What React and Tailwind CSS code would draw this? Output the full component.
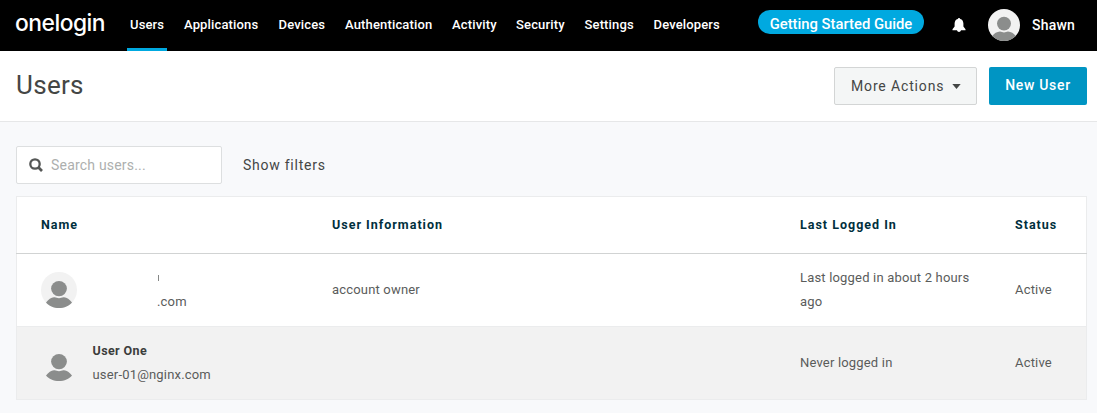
import React from 'react';

const navItems = [
  { label: 'Users', width: 'w-[54px]', active: true },
  { label: 'Applications', width: 'w-[94.5px]' },
  { label: 'Devices', width: 'w-[66.5px]' },
  { label: 'Authentication', width: 'w-[107px]' },
  { label: 'Activity', width: 'w-[64px]' },
  { label: 'Security', width: 'w-[68.5px]' },
  { label: 'Settings', width: 'w-[69px]' },
  { label: 'Developers', width: 'w-[80px]' },
];

function Person() {
  return (
    <>
      <path
        d="M5 30.5C7.500 27.300 10.500 25 13.500 25.300C15.200 25.500 16.400 26.200 18 26.200C19.600 26.200 20.800 25.500 22.500 25.300C25.500 25 28.500 27.300 31 30.500C28.200 34 23.500 36 18 36C12.500 36 7.800 34 5 30.500Z"
        fill="#8b8d8c"
      />
      <ellipse cx="18" cy="16.600" rx="7.900" ry="7.600" fill="#8b8d8c" />
    </>
  );
}

function Avatar() {
  return (
    <svg viewBox="0 0 36 36" className="block size-9 shrink-0">
      <circle cx="18" cy="18" r="18" fill="#f2f2f2" />
      <Person />
    </svg>
  );
}

function HeaderAvatar() {
  return (
    <svg viewBox="0 0 32 32" className="block size-8 shrink-0">
      <circle cx="16" cy="16" r="16" fill="#f2f2f2" />
      <path
        d="M4.300 27C6 24.500 9 22.700 12 22.600C13.500 22.700 14.500 23.600 16 23.600C17.500 23.600 18.500 22.700 20 22.600C23 22.700 26 24.500 27.700 27C24.900 30.100 20.700 32 16 32C11.300 32 7.100 30.100 4.300 27Z"
        fill="#8b8d8c"
      />
      <ellipse cx="16" cy="14.600" rx="7" ry="6.800" fill="#8b8d8c" />
    </svg>
  );
}

function Header() {
  return (
    <header className="flex h-[51px] bg-black text-white">
      <svg viewBox="0 0 112 51" className="block h-[51px] w-[112px] shrink-0" role="img" aria-label="onelogin">
        <text
          x="15"
          y="31.200"
          textLength="90"
          lengthAdjust="spacingAndGlyphs"
          fill="#fff"
          className="font-['Inter',sans-serif] text-[23px] font-medium tracking-[-0.500px]"
        >
          onelogin
        </text>
      </svg>
      <nav className="ml-[18px] flex text-[13px] font-medium leading-[49px] tracking-[0.150px]">
        {navItems.map((item) => (
          <div key={item.label} className={item.width + ' shrink-0 whitespace-nowrap'}>
            {item.active ? (
              <div className="-ml-[3px] h-[51px] w-10 border-b-[3px] border-[#00a9e0] pl-[3px]">{item.label}</div>
            ) : (
              item.label
            )}
          </div>
        ))}
      </nav>
      <div className="ml-auto flex items-center pr-[21px]">
        <div className="-mt-[7px] h-6 w-[166px] rounded-full bg-[#00a9e0] text-center text-[14.800px] font-medium leading-[28px] whitespace-nowrap">
          Getting Started Guide
        </div>
        <svg viewBox="0 0 14 14" className="-mt-px ml-7 block size-3.5" fill="#fff">
          <path d="M7 0C7.700 0 8.100.4 8.200 1C10.300 1.500 11.300 3.300 11.400 5.500V8.500L13.500 11.200V12.300H9C8.700 13.400 7.900 14 7 14C6.100 14 5.300 13.400 5 12.300H.5V11.200L2.600 8.500V5.500C2.700 3.300 3.700 1.500 5.800 1C5.900.4 6.300 0 7 0Z" />
        </svg>
        <div className="-mt-px ml-[22px]">
          <HeaderAvatar />
        </div>
        <span className="-mt-px ml-3 w-[44px] text-sm font-medium tracking-[0.200px]">Shawn</span>
      </div>
    </header>
  );
}

function TitleBar() {
  return (
    <div className="flex h-[71px] justify-between border-b border-[#e6e7e8] bg-white pl-4 pr-2.5">
      <h1 className="pt-[17px] text-[26px] leading-[34px] tracking-[0.300px] text-[#444645]">Users</h1>
      <div className="flex gap-3 pt-4">
        <button className="flex h-[38px] w-[143px] items-center rounded-[2px] border border-[#d3d5d5] bg-[#f4f6f6] pl-4 text-sm tracking-[0.850px] text-[#444645]">
          More Actions
          <svg viewBox="0 0 10 6" className="ml-2 h-[5px] w-[9px]">
            <path d="M0 0H10L5 6Z" fill="#444645" />
          </svg>
        </button>
        <button className="h-[38px] w-[98px] rounded-[2px] bg-[#0095c3] pb-0.5 text-sm font-medium tracking-[0.700px] text-white">
          New User
        </button>
      </div>
    </div>
  );
}

function Toolbar() {
  return (
    <div className="flex h-[38px] items-center">
      <div className="flex h-[38px] w-[206px] items-center rounded-[2px] border border-[#dddfe0] bg-white pl-3">
        <svg viewBox="0 0 14 14" className="size-3.5" fill="none" stroke="#555756">
          <circle cx="6" cy="6" r="4.700" strokeWidth="2.300" />
          <path d="M9.300 9.300L13 13" strokeWidth="2.700" />
        </svg>
        <span className="ml-2 text-sm tracking-[0.200px] text-[#adafae]">Search users...</span>
      </div>
      <span className="ml-[21px] text-sm tracking-[0.750px] text-[#444645]">Show filters</span>
    </div>
  );
}

const columns = 'grid grid-cols-[291px_468px_215px_1fr] items-center';

function UsersTable() {
  return (
    <div className="mt-3 h-[204px] border border-[#ebeced] bg-white text-[13px] text-[#5a5c5b]">
      <div className={columns + ' -mx-px h-[57px] border-b border-[#d1d3d3] pl-[25px] text-[12.500px] font-bold tracking-[1px] text-[#002f3d]'}>
        <span>Name</span>
        <span>User Information</span>
        <span>Last Logged In</span>
        <span>Status</span>
      </div>
      <div className={columns + ' h-[73px] border-b border-[#ebeced] pl-6 leading-6 tracking-[0.180px]'}>
        <div className="flex items-center">
          <Avatar />
          <div className="ml-20">
            <div className="flex h-6 items-center pl-px">
              <span className="h-1.5 w-px bg-[#858786]" />
            </div>
            <div>.com</div>
          </div>
        </div>
        <span>account owner</span>
        <span className="w-[185px]">Last logged in about 2 hours ago</span>
        <span>Active</span>
      </div>
      <div className={columns + ' h-[72px] bg-[#f2f2f2] pl-6 leading-6 tracking-[0.180px]'}>
        <div className="flex items-center">
          <Avatar />
          <div className="ml-[15.500px]">
            <div className="text-[12.500px] font-bold tracking-[0.400px] text-[#3b3d3c]">User One</div>
            <div>user-01@nginx.com</div>
          </div>
        </div>
        <span />
        <span>Never logged in</span>
        <span>Active</span>
      </div>
    </div>
  );
}

export default function App() {
  return (
    <div className="h-[413px] w-[1097px] overflow-hidden bg-[#f8f9fb] font-['Roboto',sans-serif]">
      <Header />
      <TitleBar />
      <main className="pl-4 pr-2.5 pt-6">
        <Toolbar />
        <UsersTable />
      </main>
    </div>
  );
}
